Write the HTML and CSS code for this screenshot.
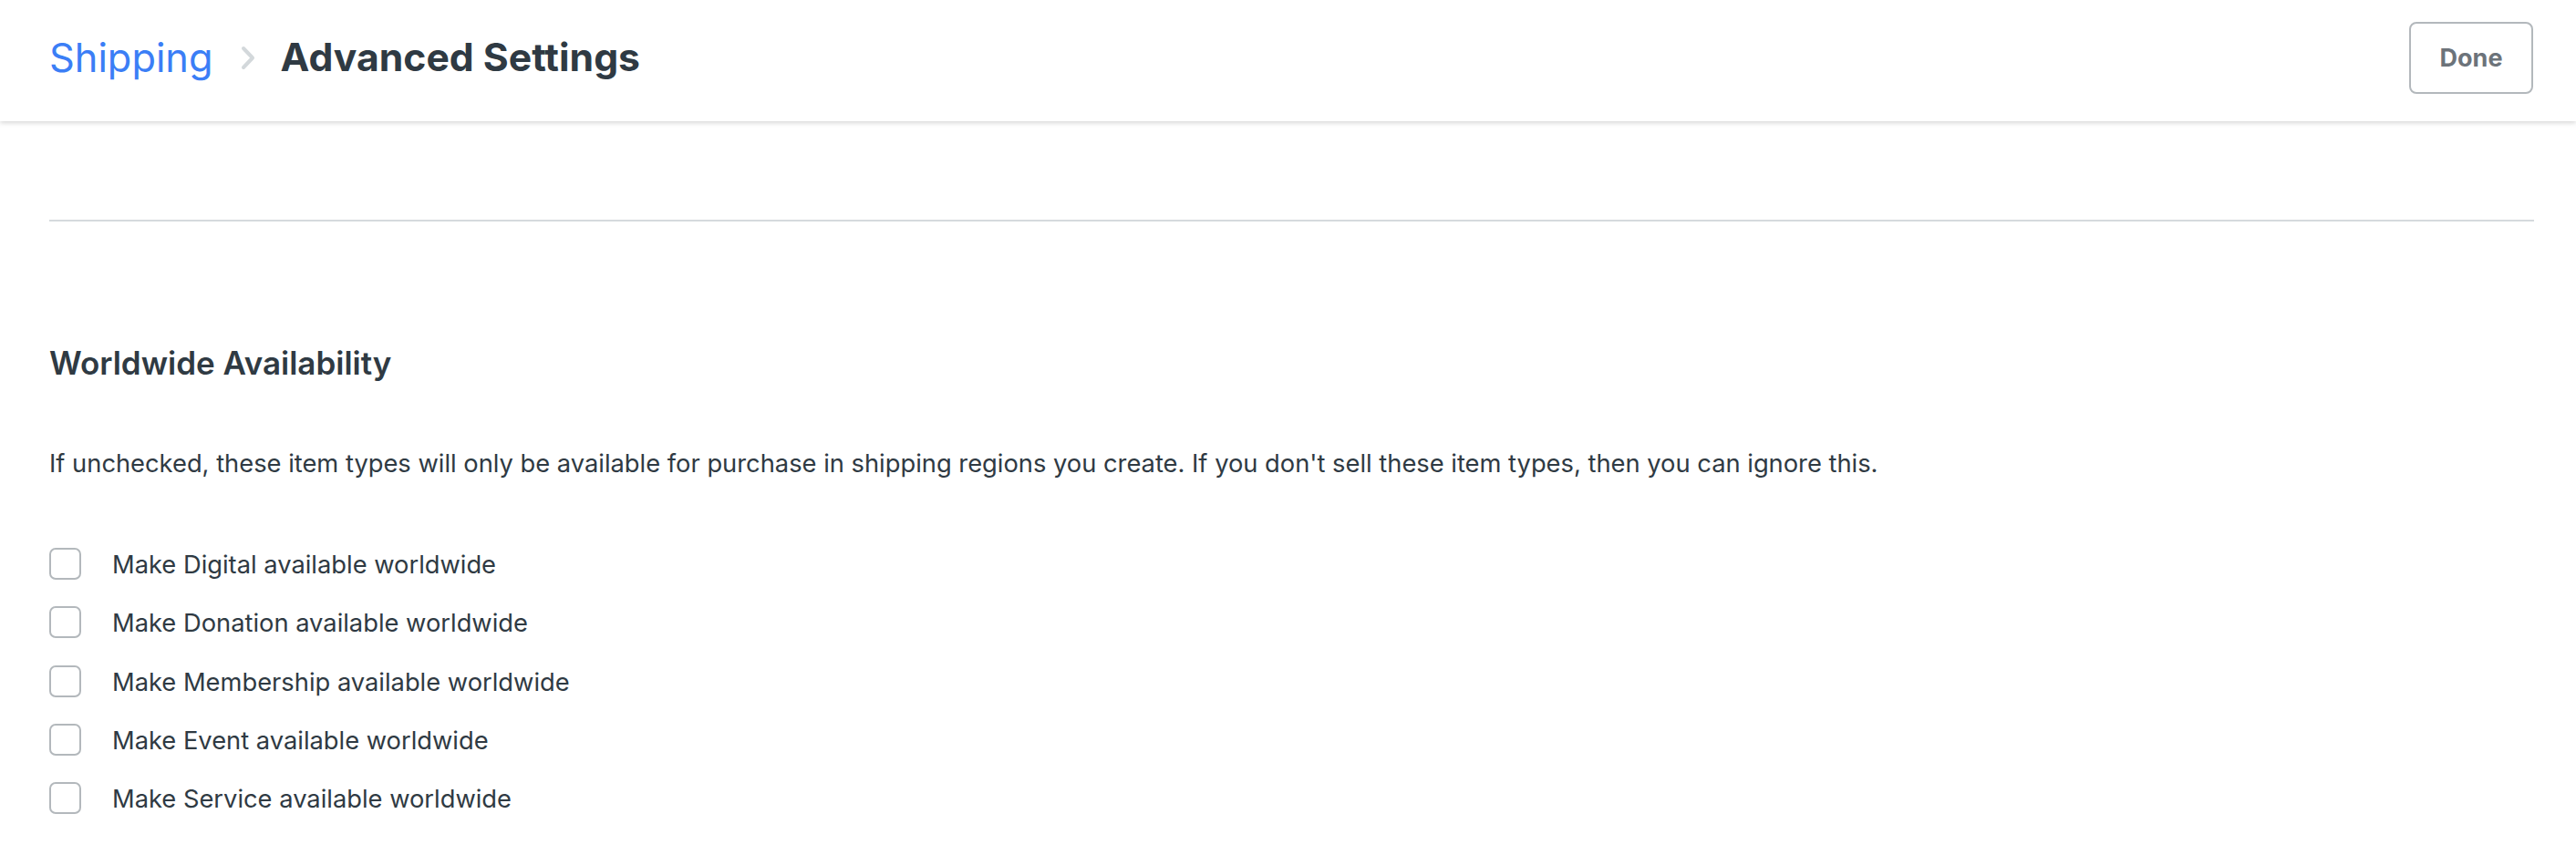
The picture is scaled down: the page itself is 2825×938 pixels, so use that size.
FILE: index.html
```html
<!DOCTYPE html>
<html lang="en">
<head>
<meta charset="utf-8">
<title>Advanced Settings</title>
<link rel="stylesheet" href="styles.css">
</head>
<body>
<header class="topbar">
  <nav class="crumbs">
    <a class="crumb-link" href="#">Shipping</a>
    <svg class="crumb-sep" width="16" height="27" viewBox="0 0 16 27"><polyline points="3,3 13,13.5 3,24" fill="none" stroke="#d3d8db" stroke-width="4" stroke-linecap="round" stroke-linejoin="round"/></svg>
    <h1 class="crumb-current">Advanced Settings</h1>
  </nav>
  <button class="btn-done" type="button">Done</button>
</header>
<main class="content">
  <hr class="divider">
  <section class="worldwide">
    <h2 class="section-title">Worldwide Availability</h2>
    <p class="section-desc">If unchecked, these item types will only be available for purchase in shipping regions you create. If you don't sell these item types, then you can ignore this.</p>
    <ul class="check-list">
      <li class="check-row"><span class="check-box"></span><span class="check-label">Make Digital available worldwide</span></li>
      <li class="check-row"><span class="check-box"></span><span class="check-label">Make Donation available worldwide</span></li>
      <li class="check-row"><span class="check-box"></span><span class="check-label">Make Membership available worldwide</span></li>
      <li class="check-row"><span class="check-box"></span><span class="check-label">Make Event available worldwide</span></li>
      <li class="check-row"><span class="check-box"></span><span class="check-label">Make Service available worldwide</span></li>
    </ul>
  </section>
</main>
</body>
</html>
```
FILE: styles.css
```css
html, body {
  margin: 0;
  padding: 0;
  background: #ffffff;
}
body {
  font-family: Inter, "Liberation Sans", Arial, sans-serif;
  color: #2f3a43;
}
.topbar {
  height: 133px;
  box-sizing: border-box;
  display: flex;
  align-items: center;
  justify-content: space-between;
  padding: 0 47px 7px 54px;
  background: #ffffff;
  box-shadow: 0 2px 5px rgba(0, 0, 0, 0.16);
  position: relative;
}
.crumbs {
  display: flex;
  align-items: center;
}
.crumb-link {
  font-size: 43.3px;
  line-height: 56px;
  color: #3b7ef6;
  text-decoration: none;
  font-weight: 400;
}
.crumb-sep {
  margin: 0 28px 0 30px;
  display: block;
}
.crumb-current {
  margin: 0;
  font-size: 42.7px;
  line-height: 56px;
  font-weight: 700;
  color: #2f3a43;
}
.btn-done {
  width: 136px;
  height: 79px;
  box-sizing: border-box;
  border: 2px solid #b3b8bc;
  border-radius: 8px;
  background: #ffffff;
  font-family: inherit;
  font-size: 27px;
  font-weight: 700;
  color: #6c737a;
  padding: 0;
}
.content {
  padding: 0 46px 0 54px;
}
.divider {
  margin: 108px 0 0 0;
  border: 0;
  height: 2px;
  background: #d5dadd;
}
.section-title {
  margin: 134px 0 0 0;
  font-size: 35px;
  line-height: 42px;
  font-weight: 600;
  color: #2f3a43;
}
.section-desc {
  margin: 72px 0 0 0;
  font-size: 27.3px;
  line-height: 36px;
  color: #2f3a43;
}
.check-list {
  list-style: none;
  margin: 74px 0 0 0;
  padding: 0;
  display: flex;
  flex-direction: column;
  gap: 29.3px;
}
.check-row {
  display: flex;
  align-items: center;
  height: 35px;
}
.check-box {
  width: 35px;
  height: 35px;
  box-sizing: border-box;
  border: 2px solid #b3b8bc;
  border-radius: 7px;
  background: #ffffff;
  flex: none;
}
.check-label {
  margin-left: 34px;
  font-size: 27.3px;
  line-height: 36px;
  padding-top: 3px;
  color: #2f3a43;
}
```
